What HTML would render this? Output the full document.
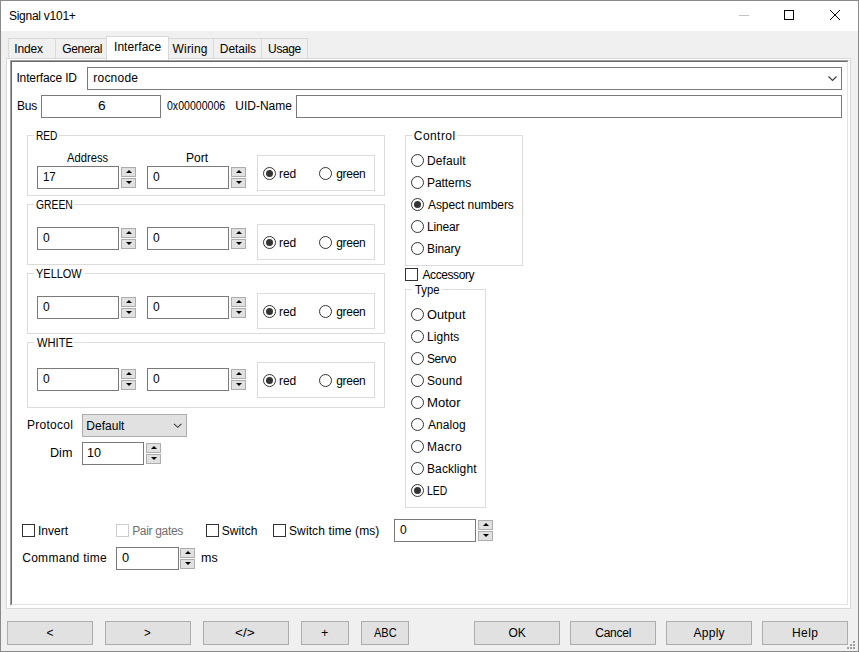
<!DOCTYPE html><html><head><meta charset="utf-8"><style>
html,body{margin:0;padding:0;width:859px;height:652px;overflow:hidden;background:#f0f0f0}
body{position:relative;font-family:"Liberation Sans",sans-serif;font-size:12px;color:#000}
div,span{position:absolute}
.t{white-space:nowrap;line-height:14px;font-size:12px}
.arr{width:0;height:0;border-left:3px solid transparent;border-right:3px solid transparent}
.arr.up{border-bottom:3px solid #000}
.arr.dn{border-top:3px solid #000}
.rb{width:13px;height:13px;border:1px solid #333;border-radius:50%;box-sizing:border-box;background:#fff}
.rb i{position:absolute;left:2px;top:2px;width:7px;height:7px;border-radius:50%;background:#333}
.cb{width:13px;height:13px;border:1px solid #333;box-sizing:border-box;background:#fff}
.cb.dis{border-color:#ccc}
</style></head><body>
<div style="left:0px;top:0px;width:859px;height:652px;border:1px solid #8a8a8a;box-sizing:border-box"></div>
<div style="left:1px;top:1px;width:857px;height:30px;background:#fff"></div>
<span class="t" style="top:9px;left:8.90px;letter-spacing:-0.255px;">Signal v101+</span>
<div style="left:739px;top:15px;width:10px;height:1px;background:#c4c4c4"></div>
<div style="left:784px;top:10px;width:10px;height:10px;border:1px solid #000;box-sizing:border-box"></div>
<svg style="position:absolute;left:828px;top:8px" width="14" height="14" viewBox="0 0 14 14"><path d="M2 2L12 12M12 2L2 12" stroke="#000" stroke-width="1"/></svg>
<div style="left:6px;top:58px;width:845px;height:551px;background:#fff;border:1px solid #d9d9d9;box-sizing:border-box"></div>
<div style="left:8px;top:38px;width:48px;height:21px;background:#f0f0f0;border:1px solid #d9d9d9;box-sizing:border-box"></div>
<div style="left:55px;top:38px;width:52px;height:21px;background:#f0f0f0;border:1px solid #d9d9d9;box-sizing:border-box"></div>
<div style="left:168px;top:38px;width:46px;height:21px;background:#f0f0f0;border:1px solid #d9d9d9;box-sizing:border-box"></div>
<div style="left:213px;top:38px;width:49px;height:21px;background:#f0f0f0;border:1px solid #d9d9d9;box-sizing:border-box"></div>
<div style="left:261px;top:38px;width:47px;height:21px;background:#f0f0f0;border:1px solid #d9d9d9;box-sizing:border-box"></div>
<div style="left:106px;top:36px;width:63px;height:24px;background:#fff;border:1px solid #d9d9d9;border-bottom:none;box-sizing:border-box"></div>
<span class="t" style="top:42px;left:14.30px;letter-spacing:-0.175px;">Index</span>
<span class="t" style="top:42px;left:62.30px;letter-spacing:-0.417px;">General</span>
<span class="t" style="top:40px;left:114.00px;letter-spacing:0.050px;">Interface</span>
<span class="t" style="top:42px;left:172.60px;letter-spacing:0.160px;">Wiring</span>
<span class="t" style="top:42px;left:219.80px;letter-spacing:-0.067px;">Details</span>
<span class="t" style="top:42px;left:268.10px;letter-spacing:-0.375px;">Usage</span>
<div style="left:10px;top:60px;width:839px;height:546px;border-top:1px solid #a0a0a0;border-left:1px solid #a0a0a0;border-right:1px solid #fff;border-bottom:1px solid #fff;box-sizing:border-box"></div>
<div style="left:11px;top:61px;width:837px;height:544px;border-top:1px solid #696969;border-left:1px solid #696969;border-right:1px solid #e3e3e3;border-bottom:1px solid #e3e3e3;box-sizing:border-box"></div>
<span class="t" style="top:71px;left:16.40px;letter-spacing:-0.127px;">Interface ID</span>
<div style="left:87px;top:67px;width:755px;height:23px;background:#fff;border:1px solid #7a7a7a;box-sizing:border-box"></div>
<span class="t" style="top:71px;left:93.30px;letter-spacing:0.217px;">rocnode</span>
<svg style="position:absolute;left:827px;top:75px" width="11" height="8" viewBox="0 0 11 8"><path d="M1.5 1.5L5.5 5.5L9.5 1.5" fill="none" stroke="#3a3a3a" stroke-width="1.1"/></svg>
<span class="t" style="top:99px;left:17.10px;letter-spacing:-0.300px;">Bus</span>
<div style="left:41px;top:95px;width:120px;height:23px;background:#fff;border:1px solid #7a7a7a;box-sizing:border-box"></div>
<span class="t" style="top:99px;left:97.76px;transform:scaleX(1.1400);transform-origin:0 0;">6</span>
<span class="t" style="top:99px;left:167.00px;transform:scaleX(0.8803);transform-origin:0 0;">0x00000006</span>
<span class="t" style="top:99px;left:235.30px;letter-spacing:-0.014px;">UID-Name</span>
<div style="left:296px;top:95px;width:546px;height:23px;background:#fff;border:1px solid #7a7a7a;box-sizing:border-box"></div>
<div style="left:27px;top:135px;width:358px;height:61px;border:1px solid #dcdcdc;box-sizing:border-box"></div>
<div style="left:34px;top:135px;width:25px;height:1px;background:#fff"></div>
<span class="t" style="top:129px;left:36.15px;transform:scaleX(0.8458);transform-origin:0 0;">RED</span>
<div style="left:37px;top:166px;width:82px;height:23px;background:#fff;border:1px solid #7a7a7a;box-sizing:border-box"></div>
<span class="t" style="top:170px;left:43.45px;transform:scaleX(0.9500);transform-origin:0 0;">17</span>
<div style="left:121px;top:167px;width:15px;height:10px;background:#e1e1e1;border:1px solid #adadad;box-sizing:border-box"></div>
<div style="left:121px;top:178px;width:15px;height:10px;background:#e1e1e1;border:1px solid #adadad;box-sizing:border-box"></div>
<div class="arr up" style="left:126px;top:170px"></div>
<div class="arr dn" style="left:126px;top:181px"></div>
<div style="left:147px;top:166px;width:82px;height:23px;background:#fff;border:1px solid #7a7a7a;box-sizing:border-box"></div>
<span class="t" style="left:153px;top:170px;">0</span>
<div style="left:231px;top:167px;width:15px;height:10px;background:#e1e1e1;border:1px solid #adadad;box-sizing:border-box"></div>
<div style="left:231px;top:178px;width:15px;height:10px;background:#e1e1e1;border:1px solid #adadad;box-sizing:border-box"></div>
<div class="arr up" style="left:236px;top:170px"></div>
<div class="arr dn" style="left:236px;top:181px"></div>
<div style="left:257px;top:155px;width:118px;height:36px;border:1px solid #dcdcdc;box-sizing:border-box"></div>
<div class="rb" style="left:263px;top:167px"><i></i></div>
<span class="t" style="top:167px;left:279.10px;letter-spacing:-0.150px;">red</span>
<div class="rb" style="left:319px;top:167px"></div>
<span class="t" style="top:167px;left:336.20px;letter-spacing:-0.275px;">green</span>
<div style="left:27px;top:204px;width:358px;height:61px;border:1px solid #dcdcdc;box-sizing:border-box"></div>
<div style="left:34px;top:204px;width:40px;height:1px;background:#fff"></div>
<span class="t" style="top:198px;left:36.14px;transform:scaleX(0.8610);transform-origin:0 0;">GREEN</span>
<div style="left:37px;top:227px;width:82px;height:23px;background:#fff;border:1px solid #7a7a7a;box-sizing:border-box"></div>
<span class="t" style="left:43px;top:231px;">0</span>
<div style="left:121px;top:228px;width:15px;height:10px;background:#e1e1e1;border:1px solid #adadad;box-sizing:border-box"></div>
<div style="left:121px;top:239px;width:15px;height:10px;background:#e1e1e1;border:1px solid #adadad;box-sizing:border-box"></div>
<div class="arr up" style="left:126px;top:231px"></div>
<div class="arr dn" style="left:126px;top:242px"></div>
<div style="left:147px;top:227px;width:82px;height:23px;background:#fff;border:1px solid #7a7a7a;box-sizing:border-box"></div>
<span class="t" style="left:153px;top:231px;">0</span>
<div style="left:231px;top:228px;width:15px;height:10px;background:#e1e1e1;border:1px solid #adadad;box-sizing:border-box"></div>
<div style="left:231px;top:239px;width:15px;height:10px;background:#e1e1e1;border:1px solid #adadad;box-sizing:border-box"></div>
<div class="arr up" style="left:236px;top:231px"></div>
<div class="arr dn" style="left:236px;top:242px"></div>
<div style="left:257px;top:224px;width:118px;height:36px;border:1px solid #dcdcdc;box-sizing:border-box"></div>
<div class="rb" style="left:263px;top:236px"><i></i></div>
<span class="t" style="top:236px;left:279.10px;letter-spacing:-0.150px;">red</span>
<div class="rb" style="left:319px;top:236px"></div>
<span class="t" style="top:236px;left:336.20px;letter-spacing:-0.275px;">green</span>
<div style="left:27px;top:273px;width:358px;height:61px;border:1px solid #dcdcdc;box-sizing:border-box"></div>
<div style="left:34px;top:273px;width:50px;height:1px;background:#fff"></div>
<span class="t" style="top:267px;left:36.09px;transform:scaleX(0.9143);transform-origin:0 0;">YELLOW</span>
<div style="left:37px;top:296px;width:82px;height:23px;background:#fff;border:1px solid #7a7a7a;box-sizing:border-box"></div>
<span class="t" style="left:43px;top:300px;">0</span>
<div style="left:121px;top:297px;width:15px;height:10px;background:#e1e1e1;border:1px solid #adadad;box-sizing:border-box"></div>
<div style="left:121px;top:308px;width:15px;height:10px;background:#e1e1e1;border:1px solid #adadad;box-sizing:border-box"></div>
<div class="arr up" style="left:126px;top:300px"></div>
<div class="arr dn" style="left:126px;top:311px"></div>
<div style="left:147px;top:296px;width:82px;height:23px;background:#fff;border:1px solid #7a7a7a;box-sizing:border-box"></div>
<span class="t" style="left:153px;top:300px;">0</span>
<div style="left:231px;top:297px;width:15px;height:10px;background:#e1e1e1;border:1px solid #adadad;box-sizing:border-box"></div>
<div style="left:231px;top:308px;width:15px;height:10px;background:#e1e1e1;border:1px solid #adadad;box-sizing:border-box"></div>
<div class="arr up" style="left:236px;top:300px"></div>
<div class="arr dn" style="left:236px;top:311px"></div>
<div style="left:257px;top:293px;width:118px;height:36px;border:1px solid #dcdcdc;box-sizing:border-box"></div>
<div class="rb" style="left:263px;top:305px"><i></i></div>
<span class="t" style="top:305px;left:279.10px;letter-spacing:-0.150px;">red</span>
<div class="rb" style="left:319px;top:305px"></div>
<span class="t" style="top:305px;left:336.20px;letter-spacing:-0.275px;">green</span>
<div style="left:27px;top:342px;width:358px;height:66px;border:1px solid #dcdcdc;box-sizing:border-box"></div>
<div style="left:34px;top:342px;width:40px;height:1px;background:#fff"></div>
<span class="t" style="top:336px;left:37.00px;transform:scaleX(0.9289);transform-origin:0 0;">WHITE</span>
<div style="left:37px;top:368px;width:82px;height:23px;background:#fff;border:1px solid #7a7a7a;box-sizing:border-box"></div>
<span class="t" style="left:43px;top:372px;">0</span>
<div style="left:121px;top:369px;width:15px;height:10px;background:#e1e1e1;border:1px solid #adadad;box-sizing:border-box"></div>
<div style="left:121px;top:380px;width:15px;height:10px;background:#e1e1e1;border:1px solid #adadad;box-sizing:border-box"></div>
<div class="arr up" style="left:126px;top:372px"></div>
<div class="arr dn" style="left:126px;top:383px"></div>
<div style="left:147px;top:368px;width:82px;height:23px;background:#fff;border:1px solid #7a7a7a;box-sizing:border-box"></div>
<span class="t" style="left:153px;top:372px;">0</span>
<div style="left:231px;top:369px;width:15px;height:10px;background:#e1e1e1;border:1px solid #adadad;box-sizing:border-box"></div>
<div style="left:231px;top:380px;width:15px;height:10px;background:#e1e1e1;border:1px solid #adadad;box-sizing:border-box"></div>
<div class="arr up" style="left:236px;top:372px"></div>
<div class="arr dn" style="left:236px;top:383px"></div>
<div style="left:257px;top:362px;width:118px;height:36px;border:1px solid #dcdcdc;box-sizing:border-box"></div>
<div class="rb" style="left:263px;top:374px"><i></i></div>
<span class="t" style="top:374px;left:279.10px;letter-spacing:-0.150px;">red</span>
<div class="rb" style="left:319px;top:374px"></div>
<span class="t" style="top:374px;left:336.20px;letter-spacing:-0.275px;">green</span>
<span class="t" style="top:151px;left:67.10px;transform:scaleX(0.9341);transform-origin:0 0;">Address</span>
<span class="t" style="top:151px;left:185.90px;letter-spacing:0.067px;">Port</span>
<div style="left:405px;top:135px;width:118px;height:131px;border:1px solid #dcdcdc;box-sizing:border-box"></div>
<div style="left:412px;top:135px;width:45px;height:1px;background:#fff"></div>
<span class="t" style="top:129px;left:413.80px;letter-spacing:0.433px;">Control</span>
<div class="rb" style="left:411px;top:154px"></div>
<span class="t" style="top:154px;left:427.00px;letter-spacing:0.083px;">Default</span>
<div class="rb" style="left:411px;top:176px"></div>
<span class="t" style="top:176px;left:427.00px;letter-spacing:-0.071px;">Patterns</span>
<div class="rb" style="left:411px;top:198px"><i></i></div>
<span class="t" style="top:198px;left:428.00px;letter-spacing:-0.069px;">Aspect numbers</span>
<div class="rb" style="left:411px;top:220px"></div>
<span class="t" style="top:220px;left:427.00px;letter-spacing:-0.160px;">Linear</span>
<div class="rb" style="left:411px;top:242px"></div>
<span class="t" style="top:242px;left:427.00px;letter-spacing:-0.120px;">Binary</span>
<div class="cb" style="left:405px;top:268px"></div>
<span class="t" style="top:268px;left:422.50px;letter-spacing:-0.412px;">Accessory</span>
<div style="left:405px;top:289px;width:81px;height:219px;border:1px solid #dcdcdc;box-sizing:border-box"></div>
<div style="left:412px;top:289px;width:30px;height:1px;background:#fff"></div>
<span class="t" style="top:283px;left:415.30px;transform:scaleX(0.9385);transform-origin:0 0;">Type</span>
<div class="rb" style="left:411px;top:308px"></div>
<span class="t" style="top:308px;left:426.93px;transform:scaleX(1.0686);transform-origin:0 0;">Output</span>
<div class="rb" style="left:411px;top:330px"></div>
<span class="t" style="top:330px;left:427.00px;letter-spacing:0.060px;">Lights</span>
<div class="rb" style="left:411px;top:352px"></div>
<span class="t" style="top:352px;left:427.00px;letter-spacing:-0.450px;">Servo</span>
<div class="rb" style="left:411px;top:374px"></div>
<span class="t" style="top:374px;left:427.00px;letter-spacing:0.100px;">Sound</span>
<div class="rb" style="left:411px;top:396px"></div>
<span class="t" style="top:396px;left:426.91px;transform:scaleX(1.0933);transform-origin:0 0;">Motor</span>
<div class="rb" style="left:411px;top:418px"></div>
<span class="t" style="top:418px;left:428.00px;letter-spacing:0.080px;">Analog</span>
<div class="rb" style="left:411px;top:440px"></div>
<span class="t" style="top:440px;left:427.00px;letter-spacing:0.350px;">Macro</span>
<div class="rb" style="left:411px;top:462px"></div>
<span class="t" style="top:462px;left:427.00px;letter-spacing:0.100px;">Backlight</span>
<div class="rb" style="left:411px;top:484px"><i></i></div>
<span class="t" style="top:484px;left:427.14px;transform:scaleX(0.8636);transform-origin:0 0;">LED</span>
<span class="t" style="top:418px;left:26.90px;letter-spacing:0.300px;">Protocol</span>
<div style="left:82px;top:414px;width:105px;height:23px;background:#e1e1e1;border:1px solid #adadad;box-sizing:border-box"></div>
<span class="t" style="top:419px;left:86.30px;letter-spacing:0.017px;">Default</span>
<svg style="position:absolute;left:172px;top:422px" width="11" height="8" viewBox="0 0 11 8"><path d="M2 1.8L5.7 5.3L9.4 1.8" fill="none" stroke="#3a3a3a" stroke-width="1.1"/></svg>
<span class="t" style="top:446px;left:49.95px;transform:scaleX(1.0500);transform-origin:0 0;">Dim</span>
<div style="left:82px;top:442px;width:62px;height:23px;background:#fff;border:1px solid #7a7a7a;box-sizing:border-box"></div>
<span class="t" style="top:446px;left:86.65px;transform:scaleX(1.0500);transform-origin:0 0;">10</span>
<div style="left:146px;top:443px;width:15px;height:10px;background:#e1e1e1;border:1px solid #adadad;box-sizing:border-box"></div>
<div style="left:146px;top:454px;width:15px;height:10px;background:#e1e1e1;border:1px solid #adadad;box-sizing:border-box"></div>
<div class="arr up" style="left:151px;top:446px"></div>
<div class="arr dn" style="left:151px;top:457px"></div>
<div class="cb" style="left:22px;top:524px"></div>
<span class="t" style="top:524px;left:38.00px;letter-spacing:0.000px;">Invert</span>
<div class="cb dis" style="left:116px;top:524px"></div>
<span class="t" style="top:524px;left:132.20px;letter-spacing:-0.322px;color:#6e6e6e">Pair gates</span>
<div class="cb" style="left:206px;top:524px"></div>
<span class="t" style="top:524px;left:221.80px;letter-spacing:0.060px;">Switch</span>
<div class="cb" style="left:273px;top:524px"></div>
<span class="t" style="top:524px;left:289.00px;letter-spacing:0.113px;">Switch time (ms)</span>
<div style="left:394px;top:519px;width:82px;height:23px;background:#fff;border:1px solid #7a7a7a;box-sizing:border-box"></div>
<span class="t" style="left:400px;top:523px;">0</span>
<div style="left:478px;top:520px;width:15px;height:10px;background:#e1e1e1;border:1px solid #adadad;box-sizing:border-box"></div>
<div style="left:478px;top:531px;width:15px;height:10px;background:#e1e1e1;border:1px solid #adadad;box-sizing:border-box"></div>
<div class="arr up" style="left:483px;top:523px"></div>
<div class="arr dn" style="left:483px;top:534px"></div>
<span class="t" style="top:551px;left:22.20px;letter-spacing:0.291px;">Command time</span>
<div style="left:116px;top:547px;width:63px;height:23px;background:#fff;border:1px solid #7a7a7a;box-sizing:border-box"></div>
<span class="t" style="top:551px;left:122.40px;transform:scaleX(1.0667);transform-origin:0 0;">0</span>
<div style="left:180px;top:548px;width:15px;height:10px;background:#e1e1e1;border:1px solid #adadad;box-sizing:border-box"></div>
<div style="left:180px;top:559px;width:15px;height:10px;background:#e1e1e1;border:1px solid #adadad;box-sizing:border-box"></div>
<div class="arr up" style="left:185px;top:551px"></div>
<div class="arr dn" style="left:185px;top:562px"></div>
<span class="t" style="top:551px;left:201.06px;transform:scaleX(1.0400);transform-origin:0 0;">ms</span>
<div style="left:7px;top:621px;width:86px;height:24px;background:#e1e1e1;border:1px solid #adadad;box-sizing:border-box"></div>
<div style="left:105px;top:621px;width:86px;height:24px;background:#e1e1e1;border:1px solid #adadad;box-sizing:border-box"></div>
<div style="left:203px;top:621px;width:86px;height:24px;background:#e1e1e1;border:1px solid #adadad;box-sizing:border-box"></div>
<div style="left:301px;top:621px;width:48px;height:24px;background:#e1e1e1;border:1px solid #adadad;box-sizing:border-box"></div>
<div style="left:361px;top:621px;width:48px;height:24px;background:#e1e1e1;border:1px solid #adadad;box-sizing:border-box"></div>
<div style="left:474px;top:621px;width:86px;height:24px;background:#e1e1e1;border:1px solid #adadad;box-sizing:border-box"></div>
<div style="left:570px;top:621px;width:86px;height:24px;background:#e1e1e1;border:1px solid #adadad;box-sizing:border-box"></div>
<div style="left:666px;top:621px;width:86px;height:24px;background:#e1e1e1;border:1px solid #adadad;box-sizing:border-box"></div>
<div style="left:762px;top:621px;width:86px;height:24px;background:#e1e1e1;border:1px solid #adadad;box-sizing:border-box"></div>
<span class="t" style="top:626px;left:46.40px;transform:scaleX(1.0000);transform-origin:0 0;">&lt;</span>
<span class="t" style="top:626px;left:144.33px;transform:scaleX(0.9667);transform-origin:0 0;">&gt;</span>
<span class="t" style="top:626px;left:235.36px;transform:scaleX(1.1375);transform-origin:0 0;">&lt;/&gt;</span>
<span class="t" style="top:626px;left:321.15px;transform:scaleX(1.0500);transform-origin:0 0;">+</span>
<span class="t" style="top:626px;left:374.20px;transform:scaleX(0.9167);transform-origin:0 0;">ABC</span>
<span class="t" style="top:626px;left:508.60px;letter-spacing:-0.100px;">OK</span>
<span class="t" style="top:626px;left:595.20px;letter-spacing:-0.220px;">Cancel</span>
<span class="t" style="top:626px;left:693.40px;letter-spacing:0.300px;">Apply</span>
<span class="t" style="top:626px;left:792.00px;letter-spacing:0.400px;">Help</span>
<div style="left:853px;top:641px;width:2px;height:2px;background:#a0a0a0"></div>
<div style="left:850px;top:644px;width:2px;height:2px;background:#a0a0a0"></div>
<div style="left:853px;top:644px;width:2px;height:2px;background:#a0a0a0"></div>
<div style="left:847px;top:647px;width:2px;height:2px;background:#a0a0a0"></div>
<div style="left:850px;top:647px;width:2px;height:2px;background:#a0a0a0"></div>
<div style="left:853px;top:647px;width:2px;height:2px;background:#a0a0a0"></div>
</body></html>
